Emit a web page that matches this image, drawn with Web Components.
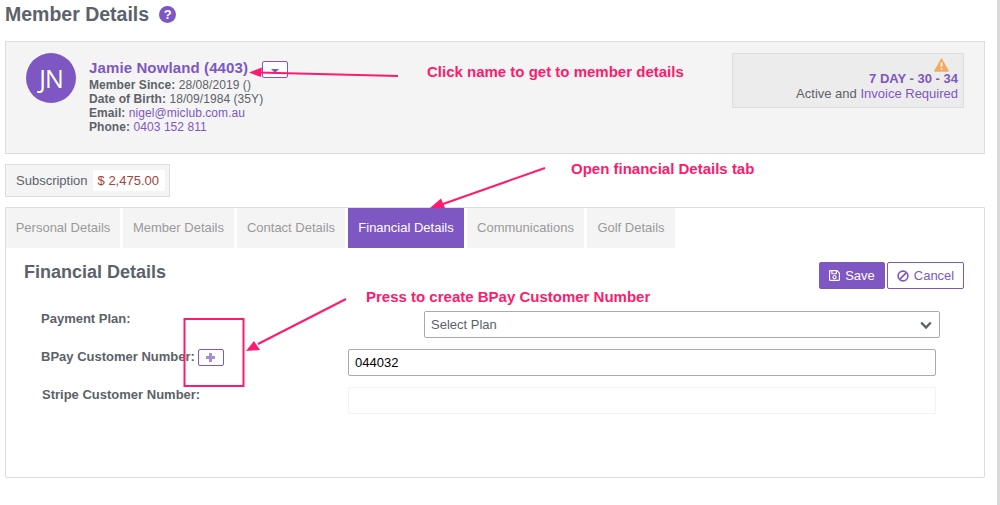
<!DOCTYPE html>
<html>
<head>
<meta charset="utf-8">
<title>Member Details</title>
<style>
  html, body { margin: 0; height: 505px; overflow: hidden; background: #fff; }
  body { font-family: "Liberation Sans", Arial, sans-serif; color: #5c6269; }
</style>
</head>
<body>
<member-page>
  <page-title>Member Details</page-title>
  <member-card initials="JN">
    <span slot="name">Jamie Nowland (4403)</span>
    <info-line label="Member Since:">28/08/2019 ()</info-line>
    <info-line label="Date of Birth:">18/09/1984 (35Y)</info-line>
    <info-line label="Email:" link>nigel@miclub.com.au</info-line>
    <info-line label="Phone:" link>0403 152 811</info-line>
    <status-box slot="status" plan="7 DAY - 30 - 34"></status-box>
  </member-card>
  <sub-chip label="Subscription">$ 2,475.00</sub-chip>
  <tab-panel>
    <tab-item width="114">Personal Details</tab-item>
    <tab-item width="111">Member Details</tab-item>
    <tab-item width="108">Contact Details</tab-item>
    <tab-item width="116" active>Financial Details</tab-item>
    <tab-item width="117">Communications</tab-item>
    <tab-item width="88">Golf Details</tab-item>
    <financial-form slot="body"></financial-form>
  </tab-panel>
</member-page>
<call-outs></call-outs>

<script>
// small helper, every element is just a template string in its own shadow root
function shadow(el, html) {
  el.attachShadow({ mode: 'open' }).innerHTML = html;
}

customElements.define('member-page', class extends HTMLElement {
  connectedCallback() {
    shadow(this, `<style>
      :host { display: flex; flex-direction: column; width: 980px; padding-left: 5px; }
    </style><slot></slot>`);
  }
});

customElements.define('page-title', class extends HTMLElement {
  connectedCallback() {
    shadow(this, `<style>
      :host { display: flex; align-items: center; gap: 10px; height: 28px; margin-bottom: 13px; }
      h1 { margin: 0; font: bold 19.5px "Liberation Sans", Arial, sans-serif; color: #5c6269; }
      i { width: 17px; height: 17px; border-radius: 50%; background: #7e57c2; color: #fff; font: bold 13px/17px "Liberation Sans", Arial, sans-serif; text-align: center; }
    </style><h1><slot></slot></h1><i>?</i>`);
  }
});

customElements.define('member-card', class extends HTMLElement {
  connectedCallback() {
    shadow(this, `<style>
      :host { display: flex; box-sizing: border-box; height: 113px; padding: 11px 20px 0 20px; background: #f4f4f4; border: 1px solid #ddd; margin-bottom: 10px; }
      .av { width: 50px; height: 50px; border-radius: 50%; background: #7e57c2; color: #fff; font: 25px/50px "Open Sans", "Liberation Sans", sans-serif; letter-spacing: -1px; text-align: center; flex: none; }
      .info { margin-left: 13px; padding-top: 6px; flex: 1; }
      .name { display: flex; align-items: center; height: 18px; margin-bottom: 1px; font: bold 15px/18px "Liberation Sans", Arial, sans-serif; color: #7e57c2; letter-spacing: .12px; }
      .caret { width: 26px; height: 17px; box-sizing: border-box; margin-left: 14px; margin-top: 2px; border: 1px solid #7e57c2; border-radius: 2px; background: #fff; display: flex; justify-content: center; align-items: center; }
      .caret b { width: 0; height: 0; border: 4px solid transparent; border-top: 4px solid #7e57c2; border-bottom: 0; margin-top: 3px; }
      .lines { display: flex; flex-direction: column; }
      .st { flex: none; }
    </style>
    <div class="av">${this.getAttribute('initials')}</div>
    <div class="info">
      <div class="name"><slot name="name"></slot><span class="caret"><b></b></span></div>
      <div class="lines"><slot></slot></div>
    </div>
    <div class="st"><slot name="status"></slot></div>`);
  }
});

customElements.define('info-line', class extends HTMLElement {
  connectedCallback() {
    const c = this.hasAttribute('link') ? '#7e57c2' : '#5c6269';
    shadow(this, `<style>
      :host { display: block; font: 12px/14px "Liberation Sans", Arial, sans-serif; letter-spacing: .07px; height: 14px; }
      b { color: #5c6269; }
      span { color: ${c}; }
    </style><b>${this.getAttribute('label')}</b> <span><slot></slot></span>`);
  }
});

customElements.define('status-box', class extends HTMLElement {
  connectedCallback() {
    shadow(this, `<style>
      :host { display: flex; flex-direction: column; align-items: flex-end; box-sizing: border-box; width: 232px; height: 55px; padding: 4px 5px 0 0; background: #ececec; border: 1px solid #ddd; font: 13px/15px "Liberation Sans", Arial, sans-serif; color: #5c6269; }
      svg { display: block; margin-right: 9px; margin-bottom: -1px; }
      .p { color: #7e57c2; }
      .p b { font-weight: bold; }
      .s { line-height: 16px; }
      .s span { color: #7e57c2; }
    </style>
    <svg width="15" height="14" viewBox="0 0 15 14"><path d="M7.5 1 14.2 13H.8z" fill="#f4a962" stroke="#f4a962" stroke-width="1.4" stroke-linejoin="round"/><path d="M7.5 4.5v4.200M7.500 10v1.600" stroke="#fff" stroke-width="1.600"/></svg>
    <div class="p"><b>${this.getAttribute('plan')}</b></div>
    <div class="s">Active and <span>Invoice Required</span></div>`);
  }
});

customElements.define('sub-chip', class extends HTMLElement {
  connectedCallback() {
    shadow(this, `<style>
      :host { display: flex; align-items: center; box-sizing: border-box; width: 165px; height: 33px; padding-left: 10px; background: #f4f4f4; border: 1px solid #ddd; margin-bottom: 10px; font: 13px "Liberation Sans", Arial, sans-serif; color: #5c6269; }
      span { box-sizing: border-box; width: 72px; height: 21px; margin-left: 5px; background: #fff; color: #a5423c; line-height: 21px; padding-left: 5px; white-space: nowrap; border-radius: 2px; }
      label { white-space: nowrap; }
    </style><label>${this.getAttribute('label')}</label><span><slot></slot></span>`);
  }
});

customElements.define('tab-panel', class extends HTMLElement {
  connectedCallback() {
    shadow(this, `<style>
      :host { display: block; box-sizing: border-box; height: 271px; border: 1px solid #ddd; border-radius: 0 0 2px 2px; background: #fff; }
      .tabs { display: flex; gap: 3px; height: 40px; background: #fff; }
    </style><div class="tabs"><slot></slot></div><slot name="body"></slot>`);
  }
});

customElements.define('tab-item', class extends HTMLElement {
  connectedCallback() {
    const on = this.hasAttribute('active');
    shadow(this, `<style>
      :host { display: block; width: ${this.getAttribute('width')}px; height: 40px; text-align: center; font: 13px/40px "Liberation Sans", Arial, sans-serif; white-space: nowrap; background: ${on ? '#7e57c2' : '#f4f4f4'}; color: ${on ? '#fff' : '#9a9a9a'}; }
    </style><slot></slot>`);
  }
});

customElements.define('financial-form', class extends HTMLElement {
  connectedCallback() {
    shadow(this, `<style>
      :host { display: block; font: 13px "Liberation Sans", Arial, sans-serif; color: #5c6269; }
      .head { display: flex; align-items: flex-start; height: 63px; padding: 14px 20px 0 18px; box-sizing: border-box; }
      h2 { flex: 1; margin: 0; font: bold 18px/20px "Liberation Sans", Arial, sans-serif; color: #5c6269; }
      button { display: flex; align-items: center; justify-content: center; gap: 5px; box-sizing: border-box; height: 27px; border-radius: 2px; border: 1px solid #7e57c2; font: 13px "Liberation Sans", Arial, sans-serif; padding: 0; }
      .save { width: 66px; background: #7e57c2; color: #fff; margin-right: 2px; }
      .cancel { width: 77px; background: #fff; color: #7e57c2; }
      .row { display: flex; align-items: flex-start; height: 27px; margin-bottom: 11px; }
      label { display: block; font-weight: bold; white-space: nowrap; line-height: 15px; margin-top: -2px; }
      .box { box-sizing: border-box; height: 27px; border: 1px solid #aaa; border-radius: 2px; background: #fff; line-height: 25px; padding-left: 6px; }
      .sel { position: relative; width: 516px; color: #5c6269; }
      .sel svg { position: absolute; right: 7px; top: 9px; }
      .inp { width: 588px; color: #000; }
      .off { width: 588px; border-color: #f2f2f2; }
      .plus { display: inline-flex; align-items: center; justify-content: center; box-sizing: border-box; width: 26px; height: 17px; margin-left: 3px; border: 1px solid #7e57c2; border-radius: 2px; background: #fff; }
      .cell { flex: none; display: flex; align-items: center; height: 17px; }
    </style>
    <div class="head">
      <h2>Financial Details</h2>
      <button class="save"><svg width="11" height="13" viewBox="0 0 448 512"><path fill="#fff" d="M433.941 129.941l-83.882-83.882A48 48 0 0 0 316.118 32H48C21.49 32 0 53.49 0 80v352c0 26.51 21.49 48 48 48h352c26.51 0 48-21.49 48-48V163.882a48 48 0 0 0-14.059-33.941zM272 80v80H144V80h128zm122 352H54a6 6 0 0 1-6-6V86a6 6 0 0 1 6-6h42v104c0 13.255 10.745 24 24 24h176c13.255 0 24-10.745 24-24V83.882l78.243 78.243a6 6 0 0 1 1.757 4.243V426a6 6 0 0 1-6 6zM224 232c-48.523 0-88 39.477-88 88s39.477 88 88 88 88-39.477 88-88-39.477-88-88-88zm0 128c-22.056 0-40-17.944-40-40s17.944-40 40-40 40 17.944 40 40-17.944 40-40 40z"/></svg>Save</button>
      <button class="cancel"><svg width="12" height="12" viewBox="0 0 12 12" fill="none" stroke="#7e57c2" stroke-width="1.6"><circle cx="6" cy="6" r="4.9"/><path d="M2.6 9.4 9.4 2.6"/></svg>Cancel</button>
    </div>
    <div class="row">
      <div class="cell" style="width:383px;margin-left:35px"><label>Payment Plan:</label></div>
      <div class="box sel">Select Plan<svg width="12" height="9" viewBox="0 0 12 9" fill="none" stroke="#5c6269" stroke-width="2.4"><path d="M1.2 1.5 6 6.5l4.8-5"/></svg></div>
    </div>
    <div class="row">
      <div class="cell" style="width:307px;margin-left:35px"><label>BPay Customer Number:</label><span class="plus"><svg width="11" height="11" viewBox="0 0 11 11"><path d="M5.500 1v9M1 5.500h9" stroke="#a58bd8" stroke-width="3"/></svg></span></div>
      <div class="box inp">044032</div>
    </div>
    <div class="row">
      <div class="cell" style="width:306px;margin-left:36px"><label>Stripe Customer Number:</label></div>
      <div class="box off"></div>
    </div>`);
  }
});

// the pink notes and arrows drawn on top of the screenshot
customElements.define('call-outs', class extends HTMLElement {
  connectedCallback() {
    const pink = '#ff1a6e';
    shadow(this, `<style>
      :host { position: absolute; left: 0; top: 0; width: 1000px; height: 505px; pointer-events: none; }
      svg { position: absolute; left: 0; top: 0; }
      p { position: absolute; margin: 0; font: bold 15px/16px "Liberation Sans", Arial, sans-serif; color: ${pink}; white-space: nowrap; }
      .edge { position: absolute; left: 997px; top: 0; width: 3px; height: 505px; background: #d9d9d9; }
    </style>
    <div class="edge"></div>
    <p style="left:427px;top:64px">Click name to get to member details</p>
    <p style="left:571px;top:161px">Open financial Details tab</p>
    <p style="left:366px;top:289px">Press to create BPay Customer Number</p>
    <svg width="1000" height="505" fill="none">
      <path d="M398 76 258 72.500" stroke="${pink}" stroke-width="2"/>
      <path d="M249 72.500 262 67.500 261 77z" fill="${pink}"/>
      <path d="M545 168 443 204" stroke="${pink}" stroke-width="2"/>
      <path d="M430 208 441 198.500 445 208z" fill="${pink}"/>
      <path d="M346 299 258 344" stroke="${pink}" stroke-width="2"/>
      <path d="M246 351 254 341 260 350z" fill="${pink}"/>
      <rect x="184.500" y="319" width="59" height="67" stroke="${pink}" stroke-width="2"/>
    </svg>`);
  }
});
</script>
</body>
</html>
